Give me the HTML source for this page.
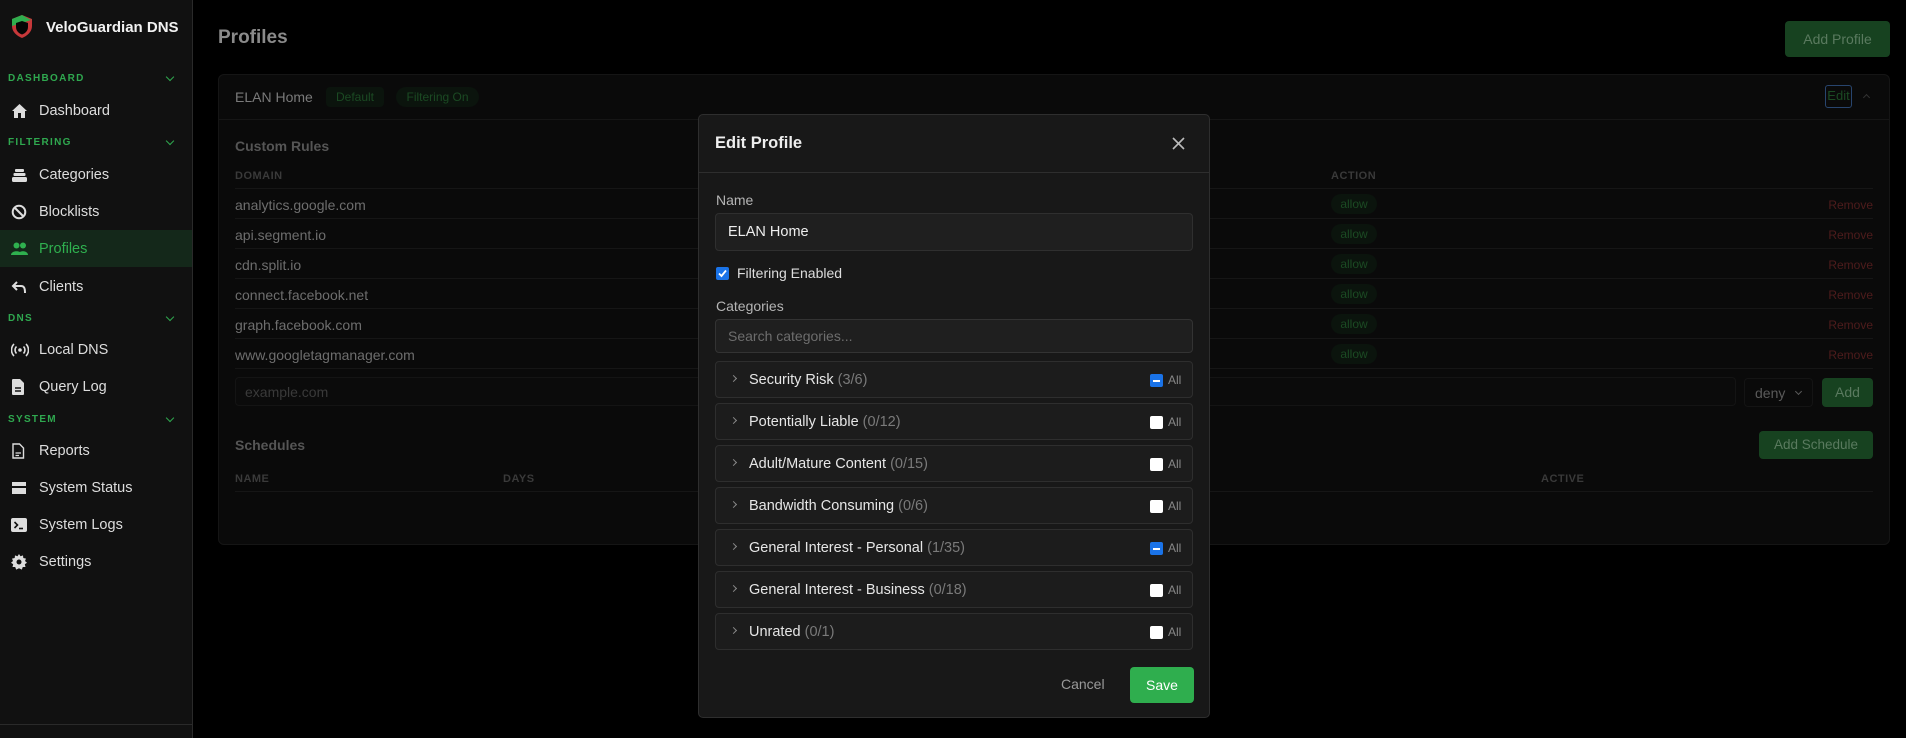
<!DOCTYPE html>
<html><head><meta charset="utf-8"><style>
*{box-sizing:border-box;margin:0;padding:0}
body{width:1906px;height:738px;background:#000;font-family:"Liberation Sans",sans-serif;position:relative;overflow:hidden}
.a{position:absolute}
.sb{left:0;top:0;width:193px;height:738px;background:#111;border-right:1px solid #2a2a2a}
.sec{position:absolute;left:8px;font-size:10px;font-weight:bold;letter-spacing:1.3px;color:#2fa84f}
.chev{position:absolute;left:167px;width:6px;height:6px;border-right:1.5px solid #2fa84f;border-bottom:1.5px solid #2fa84f;transform:rotate(45deg)}
.it{position:absolute;left:0;width:192px;height:37px;display:flex;align-items:center;font-size:14.5px;color:#ddd}
.it svg{position:absolute;left:11px}
.it span{position:absolute;left:39px}
.m{color:#6e6e6e;font-size:14px}
.row{position:absolute;left:235px;width:1638px;height:1px;background:#161616}
.allow{position:absolute;left:1331px;width:46px;height:20px;border-radius:10px;background:#0b140d;color:#1b4a23;font-size:12px;text-align:center;line-height:20px}
.rm{position:absolute;right:33px;color:#4e1c1c;font-size:12px}
.hd{position:absolute;font-size:11px;font-weight:bold;color:#3a3a3a;letter-spacing:.5px}
.modal{left:698px;top:114px;width:512px;height:604px;background:#181818;border:1px solid #2e2e2e;border-radius:5px}
.cat{position:absolute;left:16px;width:478px;height:37px;background:#1c1c1c;border:1px solid #2e2e2e;border-radius:4px;font-size:14.5px;color:#e6e6e6}
.cat .c{position:absolute;left:15px;top:14px;width:5px;height:5px;border-right:1px solid #888;border-top:1px solid #888;transform:rotate(45deg)}
.cat .t{position:absolute;left:33px;top:10px}
.cat .t i{font-style:normal;color:#7a7a7a}
.cat .cb{position:absolute;left:434px;top:12px;width:13px;height:13px;background:#fff;border-radius:2px}
.cat .cb.ind{background:#1a73e8}
.cat .cb.ind:after{content:"";position:absolute;left:3px;top:5.5px;width:7px;height:2px;background:#fff}
.cat .al{position:absolute;left:452px;top:11px;font-size:12px;color:#888}
.gbtn{background:#174220;color:#5a7a5f}
</style></head><body>
<div class="a sb">
  <svg class="a" style="left:10px;top:14px" width="24" height="25" viewBox="0 0 24 25"><path d="M12 1 L22 5 V12 C22 18 17 22 12 24 C7 22 2 18 2 12 V5 Z" fill="#c7383a"/><path d="M12 1 L2 5 V12 L12 9 L21 6 Z" fill="#2fae4e"/><path d="M12 7 L18 9 V13 C18 17 15 19.5 12 20.5 C9 19.5 6 17 6 13 V9 Z" fill="#050505"/></svg>
  <div class="a" style="left:46px;top:19px;font-size:15px;font-weight:bold;color:#f2f2f2">VeloGuardian DNS</div>
  <div class="sec" style="top:73px">DASHBOARD</div><div class="chev" style="top:74px"></div>
  <div class="it" style="top:92px"><svg width="17" height="16" viewBox="0 0 17 16"><path d="M8.5 1 L16 8 H14 V15 H10 V10 H7 V15 H3 V8 H1 Z" fill="#ddd"/></svg><span>Dashboard</span></div>
  <div class="sec" style="top:137px">FILTERING</div><div class="chev" style="top:138px"></div>
  <div class="it" style="top:156px"><svg width="17" height="14" viewBox="0 0 17 14"><rect x="4" y="1" width="9" height="3" rx="1" fill="#ddd"/><rect x="2.5" y="5" width="12" height="3" rx="1" fill="#ddd"/><rect x="1" y="9" width="15" height="5" rx="1.5" fill="#ddd"/></svg><span>Categories</span></div>
  <div class="it" style="top:193px"><svg width="16" height="16" viewBox="0 0 16 16"><circle cx="8" cy="8" r="6.3" fill="none" stroke="#ddd" stroke-width="2"/><path d="M3.5 3.5 L12.5 12.5" stroke="#ddd" stroke-width="2"/></svg><span>Blocklists</span></div>
  <div class="it" style="top:230px;background:#14281a;color:#2fb04f"><svg width="17" height="14" viewBox="0 0 17 14"><circle cx="5.5" cy="3.5" r="3" fill="#2fb04f"/><circle cx="12" cy="3.5" r="3" fill="#2fb04f"/><path d="M0 13 C0 8 11 8 11 13Z M7 13 C7 8 17 8 17 13Z" fill="#2fb04f"/></svg><span>Profiles</span></div>
  <div class="it" style="top:268px"><svg width="16" height="14" viewBox="0 0 16 14"><path d="M6 2 L2 6 L6 10 M2 6 H10 C13 6 14 8 14 13" fill="none" stroke="#ddd" stroke-width="2"/></svg><span>Clients</span></div>
  <div class="sec" style="top:313px">DNS</div><div class="chev" style="top:314px"></div>
  <div class="it" style="top:331px"><svg width="18" height="14" viewBox="0 0 18 14"><circle cx="9" cy="7" r="1.8" fill="#ddd"/><path d="M5.5 3.5 A5 5 0 0 0 5.5 10.5 M12.5 3.5 A5 5 0 0 1 12.5 10.5 M3 1 A8.5 8.5 0 0 0 3 13 M15 1 A8.5 8.5 0 0 1 15 13" fill="none" stroke="#ddd" stroke-width="1.6"/></svg><span>Local DNS</span></div>
  <div class="it" style="top:368px"><svg width="14" height="16" viewBox="0 0 14 16"><path d="M2 0 H9 L13 4 V15 C13 15.5 12.5 16 12 16 H2 C1.5 16 1 15.5 1 15 V1 C1 .5 1.5 0 2 0Z" fill="#ddd"/><path d="M4 9 H10 M4 12 H10" stroke="#111" stroke-width="1.5"/></svg><span>Query Log</span></div>
  <div class="sec" style="top:414px">SYSTEM</div><div class="chev" style="top:415px"></div>
  <div class="it" style="top:432px"><svg width="14" height="16" viewBox="0 0 14 16"><path d="M2 1 H8.5 L12.5 5 V15 H2 Z" fill="none" stroke="#ddd" stroke-width="1.4"/><path d="M4.5 10 H10 M4.5 12.5 H8" stroke="#ddd" stroke-width="1.2"/></svg><span>Reports</span></div>
  <div class="it" style="top:469px"><svg width="16" height="14" viewBox="0 0 16 14"><rect x="1" y="1" width="14" height="4" fill="#ddd"/><rect x="1" y="7" width="14" height="6" fill="#ddd"/></svg><span>System Status</span></div>
  <div class="it" style="top:506px"><svg width="16" height="14" viewBox="0 0 16 14"><rect x="0" y="0" width="16" height="14" rx="2" fill="#ddd"/><path d="M3.5 4 L6.5 7 L3.5 10" fill="none" stroke="#111" stroke-width="1.6"/><path d="M8 10.5 H12" stroke="#111" stroke-width="1.6"/></svg><span>System Logs</span></div>
  <div class="it" style="top:543px"><svg width="16" height="16" viewBox="0 0 16 16"><path d="M8 0 L9.5 2.2 L12 1.4 L12.3 4 L15 4.6 L14 7 L16 8.8 L13.8 10.3 L14.5 13 L11.8 13 L10.8 15.6 L8 14.3 L5.2 15.6 L4.2 13 L1.5 13 L2.2 10.3 L0 8.8 L2 7 L1 4.6 L3.7 4 L4 1.4 L6.5 2.2Z" fill="#ddd"/><circle cx="8" cy="8" r="2.5" fill="#111"/></svg><span>Settings</span></div>
  <div class="a" style="left:0;top:724px;width:192px;height:1px;background:#2a2a2a"></div>
</div>

<div class="a" style="left:218px;top:27px;font-size:19px;font-weight:bold;color:#8a8a8a">Profiles</div>
<div class="a gbtn" style="left:1785px;top:21px;width:105px;height:36px;border-radius:4px;font-size:14px;text-align:center;line-height:36px">Add Profile</div>

<div class="a" style="left:218px;top:74px;width:1672px;height:471px;background:#0a0a0a;border:1px solid #151515;border-radius:6px"></div>
<div class="a" style="left:219px;top:119px;width:1670px;height:1px;background:#161616"></div>
<div class="a" style="left:235px;top:89px;font-size:14px;color:#7a7a7a">ELAN Home</div>
<div class="a" style="left:326px;top:87px;width:58px;height:20px;border-radius:4px;background:#0b140d;color:#1b4a23;font-size:12px;text-align:center;line-height:20px">Default</div>
<div class="a" style="left:396px;top:87px;width:83px;height:20px;border-radius:10px;background:#0b140d;color:#1b4a23;font-size:12px;text-align:center;line-height:20px">Filtering On</div>
<div class="a" style="left:1825px;top:85px;width:27px;height:23px;border:1.5px solid #28456e;border-radius:3px;color:#1b4a23;font-size:13px;line-height:20px;text-align:center">Edit</div>
<div class="a" style="left:1864px;top:95px;width:5px;height:5px;border-left:1px solid #333;border-top:1px solid #333;transform:rotate(45deg)"></div>

<div class="a" style="left:235px;top:138px;font-size:14px;font-weight:bold;color:#555">Custom Rules</div>
<div class="hd" style="left:235px;top:170px">DOMAIN</div>
<div class="hd" style="left:1331px;top:170px">ACTION</div>
<div class="row" style="top:188px"></div>
<div class="a m" style="left:235px;top:197px">analytics.google.com</div>
<div class="row" style="top:218px"></div>
<div class="a m" style="left:235px;top:227px">api.segment.io</div>
<div class="row" style="top:248px"></div>
<div class="a m" style="left:235px;top:257px">cdn.split.io</div>
<div class="row" style="top:278px"></div>
<div class="a m" style="left:235px;top:287px">connect.facebook.net</div>
<div class="row" style="top:308px"></div>
<div class="a m" style="left:235px;top:317px">graph.facebook.com</div>
<div class="row" style="top:338px"></div>
<div class="a m" style="left:235px;top:347px">www.googletagmanager.com</div>
<div class="row" style="top:368px"></div>
<div class="allow" style="top:194px">allow</div><div class="allow" style="top:224px">allow</div><div class="allow" style="top:254px">allow</div><div class="allow" style="top:284px">allow</div><div class="allow" style="top:314px">allow</div><div class="allow" style="top:344px">allow</div>
<div class="rm" style="top:198px">Remove</div><div class="rm" style="top:228px">Remove</div><div class="rm" style="top:258px">Remove</div><div class="rm" style="top:288px">Remove</div><div class="rm" style="top:318px">Remove</div><div class="rm" style="top:348px">Remove</div>
<div class="a" style="left:235px;top:377px;width:1501px;height:29px;border:1px solid #141414;border-radius:4px;background:#0b0b0b;color:#3a3a3a;font-size:14px;padding:6px 9px">example.com</div>
<div class="a" style="left:1744px;top:378px;width:69px;height:29px;border:1px solid #141414;border-radius:4px;color:#5a5a5a;font-size:14px;padding:6px 10px;white-space:nowrap">deny<span class="a" style="left:51px;top:10px;width:5px;height:5px;border-right:1.5px solid #5a5a5a;border-bottom:1.5px solid #5a5a5a;transform:rotate(45deg)"></span></div>
<div class="a gbtn" style="left:1822px;top:378px;width:51px;height:29px;border-radius:4px;font-size:14px;text-align:center;line-height:29px">Add</div>

<div class="a" style="left:235px;top:437px;font-size:14px;font-weight:bold;color:#555">Schedules</div>
<div class="a gbtn" style="left:1759px;top:431px;width:114px;height:28px;border-radius:4px;font-size:13.5px;text-align:center;line-height:28px">Add Schedule</div>
<div class="hd" style="left:235px;top:473px">NAME</div>
<div class="hd" style="left:503px;top:473px">DAYS</div>
<div class="hd" style="left:1541px;top:473px">ACTIVE</div>
<div class="row" style="top:491px"></div>

<div class="a modal">
  <div class="a" style="left:16px;top:19px;font-size:16.5px;font-weight:bold;color:#eee">Edit Profile</div>
  <svg class="a" style="left:473px;top:22px" width="13" height="13" viewBox="0 0 13 13"><path d="M1 1 L12 12 M12 1 L1 12" stroke="#bbb" stroke-width="1.6"/></svg>
  <div class="a" style="left:0;top:57px;width:510px;height:1px;background:#2e2e2e"></div>
  <div class="a" style="left:17px;top:77px;font-size:14px;color:#b5b5b5">Name</div>
  <div class="a" style="left:16px;top:98px;width:478px;height:38px;background:#1f1f1f;border:1px solid #2f2f2f;border-radius:4px;font-size:14.5px;color:#eee;padding:10px 12px">ELAN Home</div>
  <div class="a" style="left:17px;top:152px;width:13px;height:13px;background:#1a73e8;border-radius:2px"><svg width="13" height="13" viewBox="0 0 13 13" style="position:absolute"><path d="M3 6.5 L5.5 9 L10 3.5" fill="none" stroke="#fff" stroke-width="1.8"/></svg></div>
  <div class="a" style="left:38px;top:150px;font-size:14px;color:#ddd">Filtering Enabled</div>
  <div class="a" style="left:17px;top:183px;font-size:14px;color:#b5b5b5">Categories</div>
  <div class="a" style="left:16px;top:204px;width:478px;height:34px;background:#1f1f1f;border:1px solid #333;border-radius:4px;font-size:14px;color:#6d6d6d;padding:8px 12px">Search categories...</div>
  <div class="cat" style="top:246px"><div class="c"></div><div class="t">Security Risk <i>(3/6)</i></div><div class="cb ind"></div><div class="al">All</div></div>
  <div class="cat" style="top:288px"><div class="c"></div><div class="t">Potentially Liable <i>(0/12)</i></div><div class="cb"></div><div class="al">All</div></div>
  <div class="cat" style="top:330px"><div class="c"></div><div class="t">Adult/Mature Content <i>(0/15)</i></div><div class="cb"></div><div class="al">All</div></div>
  <div class="cat" style="top:372px"><div class="c"></div><div class="t">Bandwidth Consuming <i>(0/6)</i></div><div class="cb"></div><div class="al">All</div></div>
  <div class="cat" style="top:414px"><div class="c"></div><div class="t">General Interest - Personal <i>(1/35)</i></div><div class="cb ind"></div><div class="al">All</div></div>
  <div class="cat" style="top:456px"><div class="c"></div><div class="t">General Interest - Business <i>(0/18)</i></div><div class="cb"></div><div class="al">All</div></div>
  <div class="cat" style="top:498px"><div class="c"></div><div class="t">Unrated <i>(0/1)</i></div><div class="cb"></div><div class="al">All</div></div>
  <div class="a" style="left:362px;top:561px;font-size:14px;color:#999">Cancel</div>
  <div class="a" style="left:431px;top:552px;width:64px;height:36px;border-radius:4px;background:#2fae4e;color:#fff;font-size:14px;text-align:center;line-height:36px">Save</div>
</div>
</body></html>
